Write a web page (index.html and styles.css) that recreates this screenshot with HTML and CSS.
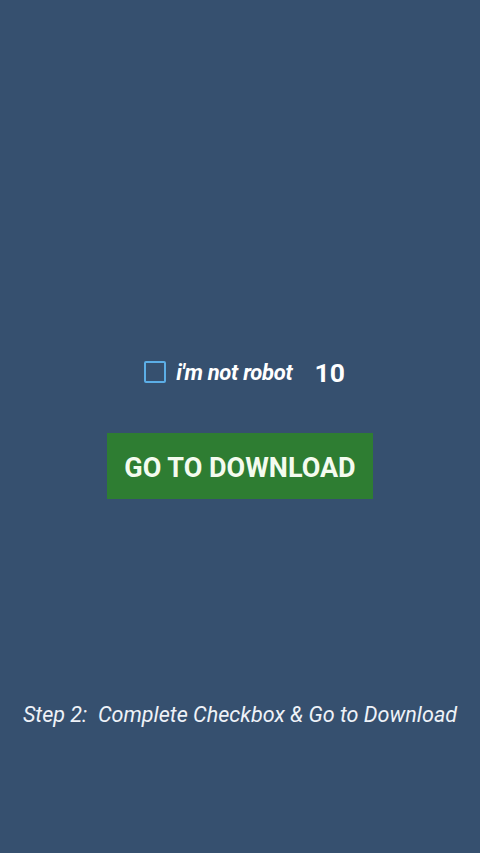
FILE: index.html
```html
<!DOCTYPE html>
<html>
<head>
<meta charset="utf-8">
<link rel="stylesheet" href="styles.css">
</head>
<body>
<div class="page">
  <div class="check-row">
    <span class="box"></span>
    <span class="label">i'm not robot</span>
    <span class="count">10</span>
  </div>
  <div class="btn">GO TO DOWNLOAD</div>
  <div class="step">Step 2:&nbsp; Complete Checkbox &amp; Go to Download</div>
</div>
</body>
</html>
```
FILE: styles.css
```css
html, body {
  margin: 0;
  padding: 0;
  background: #36506f;
}
.page {
  width: 480px;
  height: 853px;
  display: flex;
  flex-direction: column;
  align-items: center;
  font-family: Roboto, "Liberation Sans", sans-serif;
  color: #fff;
}
.check-row {
  margin-top: 358px;
  display: flex;
  align-items: center;
  height: 28px;
  margin-left: 9px;
}
.box {
  width: 18px;
  height: 18px;
  border: 2px solid #5caee6;
  border-radius: 2px;
  box-sizing: content-box;
}
.label {
  margin-left: 10px;
  font-style: italic;
  font-weight: 700;
  font-size: 22px;
  letter-spacing: -0.3px;
}
.count {
  margin-left: 22px;
  font-weight: 700;
  font-size: 26.5px;
}
.btn {
  margin-top: 47px;
  width: 266px;
  height: 66px;
  padding-top: 3px;
  box-sizing: border-box;
  background: #2e7d32;
  display: flex;
  align-items: center;
  justify-content: center;
  font-weight: 700;
  font-size: 27px;
  color: #f4fbef;
}
.step {
  margin-top: 203px;
  font-style: italic;
  font-size: 21.6px;
  color: #eef2f8;
}
```
